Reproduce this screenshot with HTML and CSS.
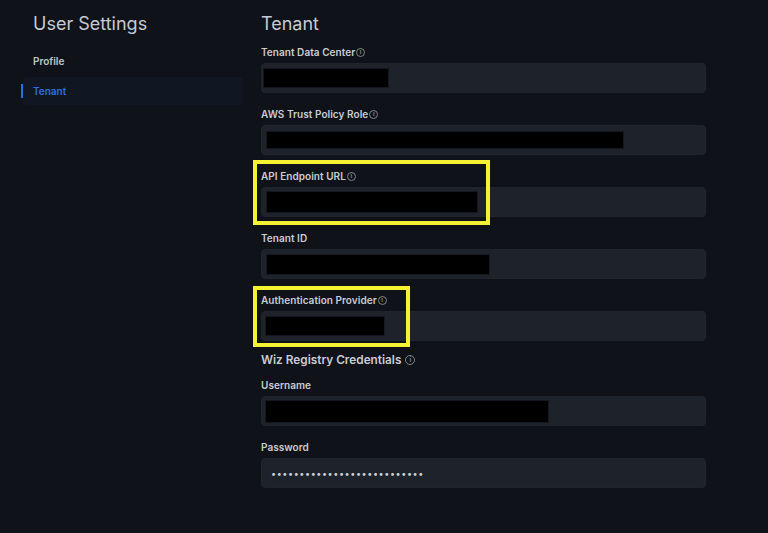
FILE: index.html
```html
<!DOCTYPE html>
<html>
<head>
<meta charset="utf-8">
<link rel="stylesheet" href="styles.css">
</head>
<body>
<div class="page">
  <aside class="sidebar">
    <h1 class="side-title">User Settings</h1>
    <nav class="nav">
      <a class="nav-item">Profile</a>
      <a class="nav-item active">Tenant</a>
    </nav>
  </aside>
  <main class="main">
    <h2 class="title">Tenant</h2>

    <div class="field">
      <div class="label">Tenant Data Center<span class="info">i</span></div>
      <div class="input"><span class="redact" style="margin-left:1px;width:126px;height:20px"></span></div>
    </div>

    <div class="field">
      <div class="label">AWS Trust Policy Role<span class="info">i</span></div>
      <div class="input"><span class="redact" style="margin-left:4px;width:358px;height:18px"></span></div>
    </div>

    <div class="field">
      <div class="label">API Endpoint URL<span class="info">i</span></div>
      <div class="input"><span class="redact" style="margin-left:4px;width:212px;height:22px"></span></div>
      <div class="highlight hl-api"></div>
    </div>

    <div class="field">
      <div class="label">Tenant ID</div>
      <div class="input"><span class="redact" style="margin-left:4px;width:224px;height:21px"></span></div>
    </div>

    <div class="field">
      <div class="label">Authentication Provider<span class="info">i</span></div>
      <div class="input"><span class="redact" style="margin-left:3px;width:120px;height:20px"></span></div>
      <div class="highlight hl-auth"></div>
    </div>

    <div class="section">Wiz Registry Credentials<span class="info big">i</span></div>

    <div class="field">
      <div class="label">Username</div>
      <div class="input"><span class="redact" style="margin-left:3px;width:284px;height:23px"></span></div>
    </div>

    <div class="field">
      <div class="label">Password</div>
      <div class="input"><span class="dots">•••••••••••••••••••••••••••</span></div>
    </div>
  </main>
</div>
</body>
</html>
```

FILE: styles.css
```css
* { box-sizing: border-box; }
html, body {
  margin: 0;
  padding: 0;
  background: #0f1219;
  font-family: Inter, "Noto Sans", "Liberation Sans", sans-serif;
  color: #c9ccd3;
}
.page {
  display: flex;
  width: 768px;
  height: 533px;
  overflow: hidden;
}
.sidebar {
  width: 261px;
  flex: none;
  padding: 12px 18px 0 21px;
}
.side-title {
  margin: 0 0 0 12px;
  font-size: 18px;
  line-height: 24px;
  font-weight: 400;
  color: #c7cad1;
}
.nav {
  margin-top: 11px;
  display: flex;
  flex-direction: column;
  gap: 2px;
}
.nav-item {
  display: block;
  height: 28px;
  line-height: 28px;
  padding-left: 12px;
  font-size: 10px;
  font-weight: 600;
  color: #c3c6cd;
  border-radius: 4px;
  position: relative;
}
.nav-item.active {
  color: #2a6fe0;
  background: #111722;
  margin-left: 2px;
  padding-left: 10px;
}
.nav-item.active::before {
  content: "";
  position: absolute;
  left: -2px;
  top: 7px;
  width: 2px;
  height: 14px;
  background: #2a6fe0;
}
.main {
  width: 445px;
  padding-top: 12px;
}
.title {
  margin: 0 0 9px 0;
  font-size: 18px;
  line-height: 24px;
  font-weight: 400;
  color: #c7cad1;
}
.field {
  position: relative;
  margin-bottom: 14px;
}
.label {
  display: flex;
  align-items: center;
  height: 14px;
  font-size: 10px;
  font-weight: 600;
  letter-spacing: 0.05px;
  color: #c9ccd3;
  margin-bottom: 4px;
}
.info {
  display: inline-flex;
  align-items: center;
  justify-content: center;
  width: 9px;
  height: 9px;
  margin-left: 1px;
  border: 1px solid #7d828c;
  border-radius: 50%;
  font-size: 6px;
  line-height: 1;
  font-weight: 700;
  color: #7d828c;
}
.info.big {
  width: 10px;
  height: 10px;
  margin-left: 4px;
  font-size: 6px;
}
.input {
  height: 30px;
  background: #1e222b;
  border: 1px solid #20242d;
  border-radius: 4px;
  display: flex;
  align-items: center;
}
.redact {
  display: block;
  background: #000;
  border: 1px solid #15181e;
}
.dots {
  margin-left: 9px;
  font-size: 9px;
  letter-spacing: 0.6px;
  color: #cdd1d8;
}
.section {
  display: flex;
  align-items: center;
  height: 16px;
  font-size: 11.8px;
  font-weight: 600;
  color: #c9ccd3;
  margin-top: -3px;
  margin-bottom: 10px;
}
.highlight {
  position: absolute;
  border: 4px solid #f4f233;
  pointer-events: none;
}
.hl-api {
  left: -8px;
  top: -9px;
  width: 237px;
  height: 65px;
}
.hl-auth {
  left: -8px;
  top: -7px;
  width: 157px;
  height: 61px;
}
```
